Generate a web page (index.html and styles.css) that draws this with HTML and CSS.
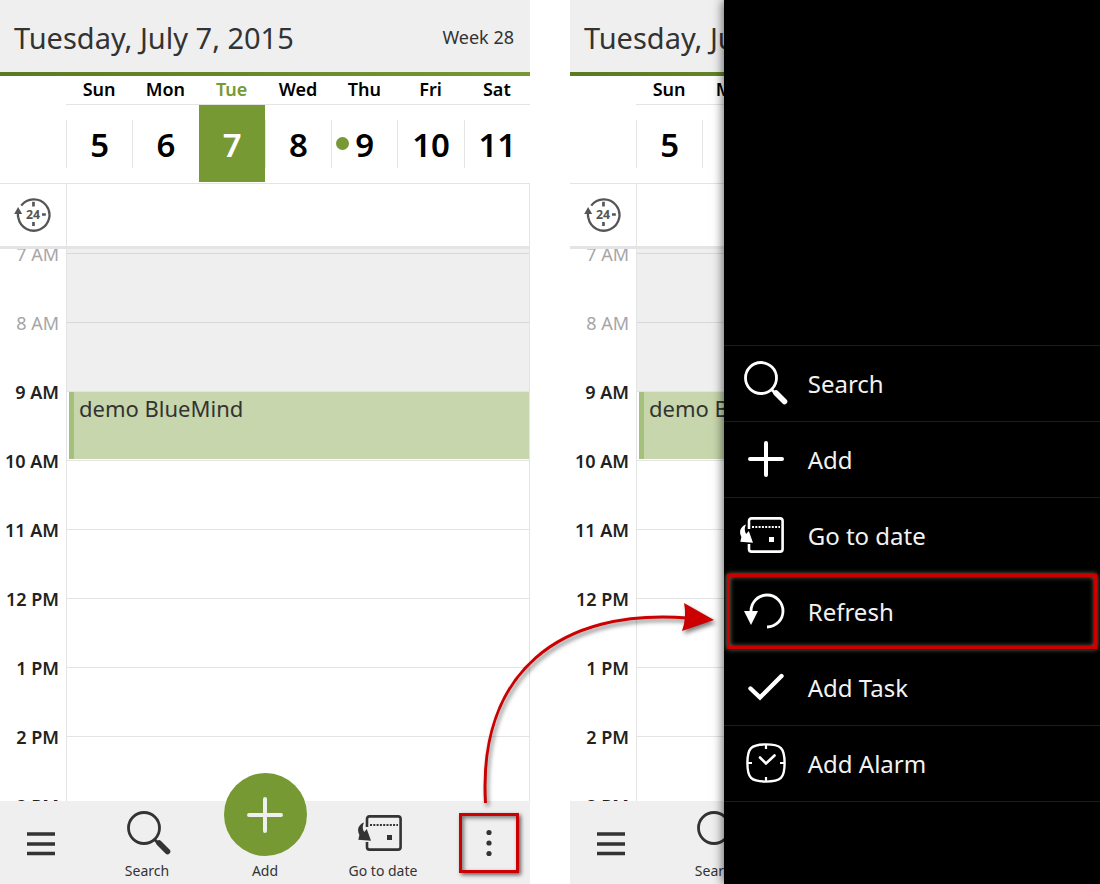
FILE: index.html
```html
<!DOCTYPE html>
<html lang="en">
<head>
<meta charset="utf-8">
<title>Calendar – day view</title>
<link rel="stylesheet" href="styles.css">
</head>
<body>
<svg class="symbols" aria-hidden="true">
  <symbol id="i-allday" viewBox="0 0 40 40">
    <path d="M7.600 11.200A16.500 16.500 0 1 1 4.600 24" fill="none" stroke="currentColor" stroke-width="2.400"/>
    <path d="M4.600 24C4 22 4 20.500 4.200 19" fill="none" stroke="currentColor" stroke-width="2.400"/>
    <path d="M0.200 20 4.300 12.500 8.600 20Z" fill="currentColor"/>
    <path d="M20.500 7v5M20.500 28.500v4M29.500 20.500h4" stroke="currentColor" stroke-width="2.800"/>
    <text x="20" y="25" text-anchor="middle" class="allday-num">24</text>
  </symbol>
  <symbol id="i-menu" viewBox="0 0 28 24">
    <path d="M0 2h28M0 12h28M0 21.500h28" stroke="currentColor" stroke-width="3.600"/>
  </symbol>
  <symbol id="i-search" viewBox="0 0 44 44">
    <circle cx="17" cy="17" r="15.500" fill="none" stroke="currentColor" stroke-width="2.800"/>
    <path d="M27.500 28.500 31 32" stroke="currentColor" stroke-width="2.800"/>
    <path d="M32 32 40.500 40.500" stroke="currentColor" stroke-width="5.600" stroke-linecap="round"/>
  </symbol>
  <symbol id="i-plus" viewBox="0 0 36 36">
    <path d="M18 2v32M2 18h32" stroke="currentColor" stroke-width="4" stroke-linecap="round"/>
  </symbol>
  <symbol id="i-goto" viewBox="0 0 44 36">
    <path d="M9 12V4Q9 1.400 11.500 1.400H40Q42.600 1.400 42.600 4V32Q42.600 34.600 40 34.600H11.500Q9 34.600 9 32V27" fill="none" stroke="currentColor" stroke-width="2.600"/>
    <path d="M12 10h28" stroke="currentColor" stroke-width="2" stroke-dasharray="2 1.300"/>
    <path d="M29 20h5v5h-5Z" fill="currentColor"/>
    <path d="M6 7.500C0.500 9.500-1.500 15 1.400 20L0.300 24.800 13 25.800 8.800 14 6.200 17C4.400 14 4.200 11 6 7.500Z" fill="currentColor"/>
  </symbol>
  <symbol id="i-more" viewBox="0 0 6 28">
    <circle cx="3" cy="3.500" r="2.600" fill="currentColor"/>
    <circle cx="3" cy="14" r="2.600" fill="currentColor"/>
    <circle cx="3" cy="24.500" r="2.600" fill="currentColor"/>
  </symbol>
  <symbol id="i-refresh" viewBox="0 0 44 36">
    <path d="M7 18A16 16 0 1 1 23 34" fill="none" stroke="currentColor" stroke-width="2.800"/>
    <path d="M0 18H14L7 32Z" fill="currentColor"/>
  </symbol>
  <symbol id="i-check" viewBox="0 0 36 28">
    <path d="M2.500 15.500 12 24.500 33.500 3" fill="none" stroke="currentColor" stroke-width="4.400" stroke-linecap="round"/>
  </symbol>
  <symbol id="i-alarm" viewBox="0 0 40 40">
    <path d="M20 1.400C35 1.400 38.600 5 38.600 20S35 38.600 20 38.600 1.400 35 1.400 20 5 1.400 20 1.400Z" fill="none" stroke="currentColor" stroke-width="2.400"/>
    <path d="M20 2v4M20 34v4M2 20h4M34 20h4" stroke="currentColor" stroke-width="2.200"/>
    <path d="M14 14.500 20 20.500 28.500 12.500" fill="none" stroke="currentColor" stroke-width="2.600" stroke-linecap="round"/>
  </symbol>
</svg>

<main class="stage">
  <section class="phone" aria-label="Day view">
    <header class="title-bar">
      <h1 class="date">Tuesday, July 7, 2015</h1>
      <span class="week">Week 28</span>
    </header>
    <div class="weekdays">
      <span>Sun</span><span>Mon</span><span class="today">Tue</span><span>Wed</span><span>Thu</span><span>Fri</span><span>Sat</span>
    </div>
    <div class="days">
      <button class="day"><span>5</span></button>
      <button class="day"><span>6</span></button>
      <button class="day selected"><span>7</span></button>
      <button class="day"><span>8</span></button>
      <button class="day busy"><span>9</span></button>
      <button class="day"><span>10</span></button>
      <button class="day"><span>11</span></button>
    </div>
    <div class="all-day">
      <div class="all-day-label"><svg class="icon-allday" role="img" aria-label="All day"><use href="#i-allday"/></svg></div>
      <div class="all-day-slot"></div>
    </div>
    <div class="timeline">
      <ol class="hours">
        <li class="off">7 AM</li><li class="off">8 AM</li><li>9 AM</li><li>10 AM</li><li>11 AM</li><li>12 PM</li><li>1 PM</li><li>2 PM</li><li>3 PM</li>
      </ol>
      <div class="slots">
        <div class="slot off rest"></div><div class="slot off"></div><div class="slot off"></div>
        <div class="slot"><a class="event" href="#event">demo BlueMind</a></div>
        <div class="slot"></div><div class="slot"></div><div class="slot"></div><div class="slot"></div><div class="slot"></div><div class="slot"></div>
      </div>
    </div>
    <footer class="action-bar">
      <button class="action menu" aria-label="Menu"><svg class="icon-menu"><use href="#i-menu"/></svg></button>
      <button class="action"><svg class="icon-search"><use href="#i-search"/></svg>Search</button>
      <button class="action add"><span class="disc"><svg class="icon-plus"><use href="#i-plus"/></svg></span>Add</button>
      <button class="action"><svg class="icon-goto"><use href="#i-goto"/></svg>Go to date</button>
      <button class="action more marked" aria-label="More"><svg class="icon-more"><use href="#i-more"/></svg></button>
    </footer>
  </section>

  <section class="phone" aria-label="Day view with menu">
    <header class="title-bar">
      <h1 class="date">Tuesday, July 7, 2015</h1>
      <span class="week">Week 28</span>
    </header>
    <div class="weekdays">
      <span>Sun</span><span>Mon</span><span class="today">Tue</span><span>Wed</span><span>Thu</span><span>Fri</span><span>Sat</span>
    </div>
    <div class="days">
      <button class="day"><span>5</span></button>
      <button class="day"><span>6</span></button>
      <button class="day selected"><span>7</span></button>
      <button class="day"><span>8</span></button>
      <button class="day busy"><span>9</span></button>
      <button class="day"><span>10</span></button>
      <button class="day"><span>11</span></button>
    </div>
    <div class="all-day">
      <div class="all-day-label"><svg class="icon-allday" role="img" aria-label="All day"><use href="#i-allday"/></svg></div>
      <div class="all-day-slot"></div>
    </div>
    <div class="timeline">
      <ol class="hours">
        <li class="off">7 AM</li><li class="off">8 AM</li><li>9 AM</li><li>10 AM</li><li>11 AM</li><li>12 PM</li><li>1 PM</li><li>2 PM</li><li>3 PM</li>
      </ol>
      <div class="slots">
        <div class="slot off rest"></div><div class="slot off"></div><div class="slot off"></div>
        <div class="slot"><a class="event" href="#event">demo BlueMind</a></div>
        <div class="slot"></div><div class="slot"></div><div class="slot"></div><div class="slot"></div><div class="slot"></div><div class="slot"></div>
      </div>
    </div>
    <footer class="action-bar">
      <button class="action menu" aria-label="Menu"><svg class="icon-menu"><use href="#i-menu"/></svg></button>
      <button class="action"><svg class="icon-search"><use href="#i-search"/></svg>Search</button>
    </footer>
    <nav class="drawer" aria-label="More actions">
      <button class="item"><span class="item-icon"><svg class="icon-search"><use href="#i-search"/></svg></span>Search</button>
      <button class="item"><span class="item-icon"><svg class="icon-plus"><use href="#i-plus"/></svg></span>Add</button>
      <button class="item"><span class="item-icon goto"><svg class="icon-goto"><use href="#i-goto"/></svg></span>Go to date</button>
      <button class="item marked"><span class="item-icon"><svg class="icon-refresh"><use href="#i-refresh"/></svg></span>Refresh</button>
      <button class="item"><span class="item-icon"><svg class="icon-check"><use href="#i-check"/></svg></span>Add Task</button>
      <button class="item"><span class="item-icon"><svg class="icon-alarm"><use href="#i-alarm"/></svg></span>Add Alarm</button>
    </nav>
  </section>

  <svg class="pointer" viewBox="0 0 1100 884" preserveAspectRatio="none" aria-hidden="true">
    <path d="M485.500 803C478 672 560 608 688 618" fill="none" stroke="#cc0000" stroke-width="3"/>
    <path d="M684 603 714 620 682 631Q687 617 684 603Z" fill="#cc0000"/>
  </svg>
</main>
</body>
</html>
```
FILE: styles.css
```css
:root {
  --green: #779933;
  --ink: #333333;
  --panel: #efefef;
  --line: #e4e4e4;
  --mark: #cc0000;
  --gutter: 66px;
  --hour: 69px;
}

* { box-sizing: border-box; }

body {
  margin: 0;
  background: #ffffff;
  color: var(--ink);
  font-family: "Noto Sans", "Open Sans", sans-serif;
}

button {
  margin: 0;
  padding: 0;
  border: 0;
  background: none;
  color: inherit;
  font: inherit;
}

svg { display: block; }

.symbols { display: none; }

.allday-num {
  font-size: 13px;
  font-weight: 700;
  fill: currentColor;
}

.stage {
  position: relative;
  display: grid;
  grid-template-columns: 1fr 1fr;
  gap: 40px;
  height: 100vh;
}

.phone {
  position: relative;
  display: flex;
  flex-direction: column;
  min-width: 0;
  min-height: 0;
}

.title-bar {
  display: flex;
  align-items: center;
  justify-content: space-between;
  height: 76px;
  padding: 2px 16px 0 14px;
  border-bottom: 4px solid;
  border-image: linear-gradient(90deg, #5a7a20, var(--green)) 1;
  background: var(--panel);
}

.date {
  margin: 0;
  font-size: 29px;
  font-weight: 400;
  white-space: nowrap;
}

.week { font-size: 18px; }

.weekdays {
  display: grid;
  grid-template-columns: repeat(7, 1fr);
  margin-left: var(--gutter);
  padding-bottom: 2px;
  border-bottom: 1px solid var(--line);
  color: #000000;
  font-size: 18px;
  font-weight: 600;
  line-height: 26px;
  text-align: center;
}

.today { color: var(--green); }

.days {
  display: grid;
  grid-template-columns: repeat(7, 1fr);
  height: 79px;
  padding-left: var(--gutter);
  padding-bottom: 1px;
  border-bottom: 1px solid var(--line);
}

.day {
  position: relative;
  display: flex;
  align-items: center;
  color: #000000;
  font-size: 33px;
  font-weight: 600;
}

.day span {
  flex: 1;
  height: 48px;
  padding-top: 1px;
  border-left: 1px solid var(--line);
  line-height: 48px;
}

.day.selected {
  background: var(--green);
  color: #ffffff;
}

.day.selected span { border-color: transparent; }

.busy::before {
  content: "";
  position: absolute;
  top: 32px;
  left: 5px;
  width: 13px;
  height: 13px;
  border-radius: 50%;
  background: var(--green);
}

.all-day {
  display: grid;
  grid-template-columns: var(--gutter) 1fr;
  height: 65px;
  border-bottom: 3px solid var(--line);
}

.all-day-label {
  display: flex;
  align-items: center;
  justify-content: center;
  padding-bottom: 2px;
  color: #555555;
}

.icon-allday { width: 38px; height: 38px; }

.all-day-slot {
  border-left: 1px solid var(--line);
  border-right: 1px solid var(--line);
}

.timeline {
  display: grid;
  grid-template-columns: var(--gutter) 1fr;
  flex: 1;
  min-height: 0;
  overflow: hidden;
}

.hours {
  margin: -29px 0 0;
  padding: 0 7px 0 0;
  list-style: none;
  color: #222222;
  font-size: 18px;
  font-weight: 600;
  line-height: var(--hour);
  text-align: right;
  white-space: nowrap;
}

.hours .off {
  color: #a6a6a6;
  font-weight: 400;
}

.slots {
  border-left: 1px solid var(--line);
  border-right: 1px solid var(--line);
}

.slot {
  display: flex;
  height: var(--hour);
  padding: 0 0 1px 2px;
  border-top: 1px solid var(--line);
}

.slot.off {
  border-color: #d8d8d8;
  background: var(--panel);
}

.slot.rest {
  height: 4px;
  border: 0;
}

.event {
  flex: 1;
  padding-left: 5px;
  border-left: 5px solid #a5bf7d;
  background: #c7d6ac;
  color: var(--ink);
  font-size: 22px;
  line-height: 32px;
  text-decoration: none;
  white-space: nowrap;
}

.action-bar {
  display: grid;
  grid-template-columns: 1fr 118px 118px 118px 1fr;
  grid-template-rows: 100%;
  height: 83px;
  background: var(--panel);
}

.action {
  display: flex;
  flex-direction: column;
  align-items: center;
  justify-content: flex-end;
  gap: 5px;
  padding-bottom: 2px;
  font-size: 14px;
  line-height: 22px;
}

.action.menu {
  justify-content: center;
  padding: 2px 6px 0 0;
}

.action.add {
  position: relative;
  gap: 4px;
}

.disc {
  display: flex;
  flex: none;
  align-items: center;
  justify-content: center;
  width: 83px;
  height: 83px;
  border-radius: 50%;
  background: var(--green);
  color: var(--panel);
}

.action.more {
  align-self: center;
  justify-self: end;
  justify-content: center;
  width: 60px;
  height: 60px;
  margin-right: 11px;
  padding: 0;
}

.action.marked {
  border: 3px solid var(--mark);
  box-shadow: 2px 2px 4px rgba(0, 0, 0, 0.6), inset 2px 2px 4px rgba(0, 0, 0, 0.5);
}

.icon-menu { width: 28px; height: 24px; }
.icon-search { width: 44px; height: 44px; }
.icon-plus { width: 36px; height: 36px; }
.icon-goto { width: 44px; height: 36px; }
.icon-more { width: 6px; height: 28px; }
.icon-refresh { width: 44px; height: 36px; }
.icon-check { width: 36px; height: 28px; }
.icon-alarm { width: 40px; height: 40px; }

.action .icon-goto { margin: 0 6px 4px 0; }
.action .icon-search { margin-left: 4px; }

.drawer {
  position: absolute;
  top: 0;
  right: 0;
  bottom: 0;
  display: flex;
  flex-direction: column;
  justify-content: flex-end;
  width: 71%;
  padding-bottom: 82px;
  background: #000000;
  color: #f2f2f2;
  box-shadow: -1px 0 10px rgba(0, 0, 0, 0.6);
}

.item {
  display: flex;
  flex: none;
  align-items: center;
  gap: 16px;
  height: 76px;
  padding-left: 16px;
  border-top: 1px solid #1c1c1c;
  font-size: 24px;
  text-align: left;
}

.item:last-child {
  height: 77px;
  border-bottom: 1px solid #1c1c1c;
}

.item-icon {
  display: flex;
  justify-content: center;
  width: 52px;
  padding-bottom: 2px;
  color: #ffffff;
}

.item-icon.goto { justify-content: flex-start; }

.item.marked {
  height: 75px;
  margin: 1px 3px 0;
  padding-left: 10px;
  border: 3px solid var(--mark);
  box-shadow: 0 0 5px rgba(190, 190, 150, 0.7), inset 0 0 5px rgba(190, 190, 150, 0.6);
}

.pointer {
  position: absolute;
  top: 0;
  left: 0;
  width: 100%;
  height: 100%;
  pointer-events: none;
  filter: drop-shadow(2px 3px 2px rgba(0, 0, 0, 0.5));
}
```
